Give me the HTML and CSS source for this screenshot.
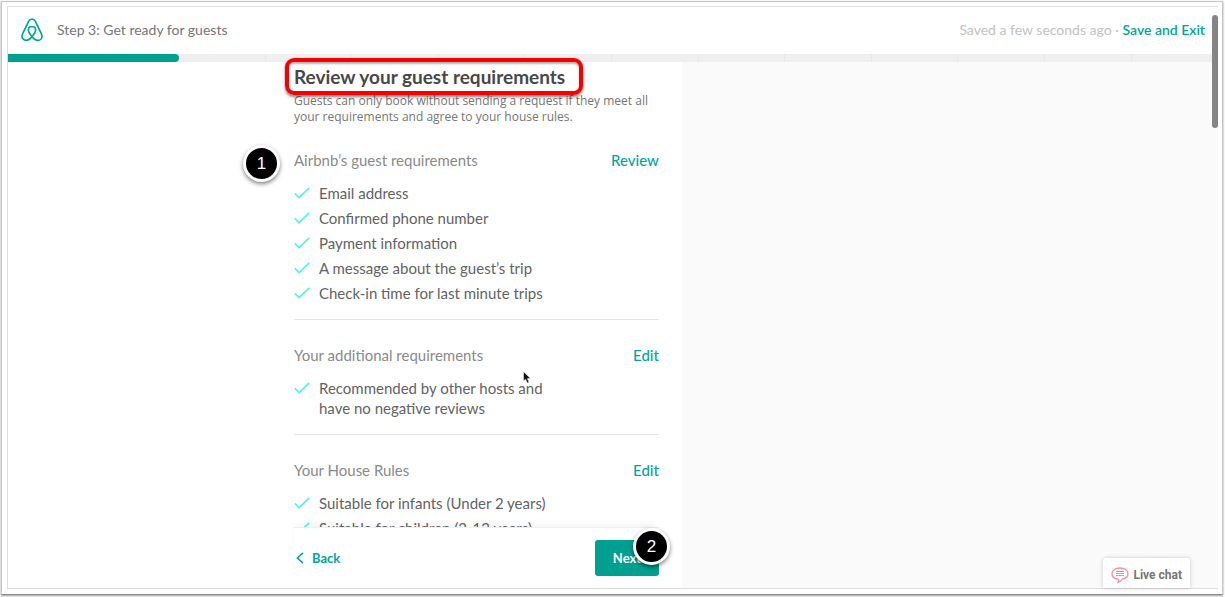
FILE: index.html
```
<!DOCTYPE html>
<html lang="en">
<head>
  <meta charset="UTF-8" />
  <meta name="viewport" content="width=device-width, initial-scale=1.0" />
  <title>Step 3: Get ready for guests</title>
  <link rel="stylesheet" href="styles.css">
</head>
<body>

<!-- Shared check mark -->
<svg class="sprite" aria-hidden="true">
  <symbol id="check" viewBox="0 0 16 12">
    <path d="M0.8 6.4 L5 10.6 L15.2 0.8" fill="none" stroke="#4df5e4" stroke-width="1.6" />
  </symbol>
</svg>

<div class="frame">
  <div class="window">
    <header class="topbar">
      <svg class="logo" viewBox="0 0 22 24" aria-hidden="true">
        <path d="M11 18.6 C8.6 15.8 7.4 13.9 7.4 12 C7.4 9.8 9 8.5 11 8.5 C13 8.5 14.6 9.8 14.6 12 C14.6 13.9 13.4 15.8 11 18.6 C9.2 20.8 7.4 22.4 5.3 22.4 C2.9 22.4 1 20.6 1 18.2 C1 17.2 1.3 16.4 1.8 15.3 L7.6 3.4 C8.5 1.7 9.4 1 11 1 C12.6 1 13.5 1.7 14.4 3.4 L20.2 15.3 C20.7 16.4 21 17.2 21 18.2 C21 20.6 19.1 22.4 16.7 22.4 C14.6 22.4 12.8 20.8 11 18.6 Z" fill="none" stroke="#00a699" stroke-width="1.7" stroke-linejoin="round" />
      </svg>
      <span class="step">Step 3: Get ready for guests</span>
      <span class="saved">Saved a few seconds ago · <a class="link" href="#">Save and Exit</a></span>
    </header>

    <div class="progress">
      <span class="done"></span>
      <i></i><i></i><i></i><i></i><i></i><i></i><i></i><i></i><i></i><i></i><i></i><i></i>
    </div>

    <div class="body">
      <main class="main">
        <div class="content">
          <h1 class="heading">Review your guest requirements</h1>
          <p class="intro">Guests can only book without sending a request if they meet all your requirements and agree to your house rules.</p>

          <section class="section">
            <span class="badge badge-one">1</span>
            <div class="section-head">
              <h2>Airbnb’s guest requirements</h2>
              <a class="link" href="#">Review</a>
            </div>
            <ul class="checks">
              <li><svg><use href="#check" /></svg><span>Email address</span></li>
              <li><svg><use href="#check" /></svg><span>Confirmed phone number</span></li>
              <li><svg><use href="#check" /></svg><span>Payment information</span></li>
              <li><svg><use href="#check" /></svg><span>A message about the guest’s trip</span></li>
              <li><svg><use href="#check" /></svg><span>Check-in time for last minute trips</span></li>
            </ul>
          </section>

          <section class="section">
            <div class="section-head">
              <h2>Your additional requirements</h2>
              <a class="link" href="#">Edit</a>
            </div>
            <ul class="checks">
              <li><svg><use href="#check" /></svg><span>Recommended by other hosts and<br>have no negative reviews</span></li>
            </ul>
            <svg class="pointer" viewBox="0 0 8 13" aria-hidden="true">
              <path d="M0.5 0.5 V10 L2.6 8.2 L4.2 12 L6 11.2 L4.4 7.6 H7.4 Z" fill="#111" stroke="#fff" stroke-width="0.5" />
            </svg>
          </section>

          <section class="section">
            <div class="section-head">
              <h2>Your House Rules</h2>
              <a class="link" href="#">Edit</a>
            </div>
            <ul class="checks">
              <li><svg><use href="#check" /></svg><span>Suitable for infants (Under 2 years)</span></li>
              <li><svg><use href="#check" /></svg><span>Suitable for children (2-12 years)</span></li>
            </ul>
          </section>
        </div>

        <footer class="footer">
          <div class="actions">
            <button class="back" type="button">
              <svg viewBox="0 0 8 12" aria-hidden="true"><path d="M7 0.8 L1.4 6 L7 11.2" fill="none" stroke="#00a699" stroke-width="1.6" /></svg>
              Back
            </button>
            <div class="next-wrap">
              <button class="next" type="button">Next</button>
              <span class="badge badge-two">2</span>
            </div>
          </div>
        </footer>
      </main>

      <aside class="side">
        <button class="chat" type="button">
          <svg viewBox="0 0 18 16" aria-hidden="true">
            <path d="M9 1 C13.6 1 17 3.3 17 6.6 C17 9.8 14.4 11.7 11.2 12.2 C10.4 13.6 9.2 14.6 7.2 15.2 C7.8 14.2 7.8 13.2 7.6 12.3 C3.8 11.9 1 9.9 1 6.6 C1 3.3 4.4 1 9 1 Z" fill="none" stroke="#ff8a8d" stroke-width="1.3" />
            <path d="M5 4.5 H13 M5 6.5 H13 M5 8.5 H13" fill="none" stroke="#ff8a8d" stroke-width="1" />
          </svg>
          Live chat
        </button>
      </aside>
    </div>

    <span class="scroll-thumb"></span>
  </div>
</div>

</body>
</html>
```
FILE: styles.css
```
* {
  box-sizing: border-box;
}

body {
  margin: 0;
  height: 100vh;
  padding: 1px 2px 2px 1px;
  overflow: hidden;
  background: #fff;
  color: #636363;
  font-family: "Lato", sans-serif;
  font-size: 15px;
  line-height: 20px;
}

h1, h2, p, ul {
  margin: 0;
  padding: 0;
}

.sprite {
  position: absolute;
  width: 0;
  height: 0;
}

.frame {
  height: 100%;
  padding: 4px 4px 5px 5px;
  border: 1px solid #c4c4c4;
  border-bottom-color: #8c8c8c;
  box-shadow: 0 1px 2px rgba(0, 0, 0, 0.4);
}

.window {
  position: relative;
  display: flex;
  flex-direction: column;
  height: 100%;
  border: 1px solid #dedede;
  border-width: 1px 0 1px 1px;
}

.link {
  color: #00a699;
  font-weight: 500;
  text-decoration: none;
}

/* Top bar */
.topbar {
  display: flex;
  align-items: center;
  height: 47px;
  flex: none;
  padding: 0 13px 2px;
  font-size: 14px;
}

.topbar .link {
  font-weight: 600;
}

.logo {
  width: 22px;
  height: 24px;
  margin-right: 14px;
}

.step {
  color: #767676;
}

.saved {
  margin-left: auto;
  color: #c2c2c2;
}

.progress {
  display: flex;
  flex: none;
  height: 8px;
  background: #efefef;
}

.progress i {
  flex: 1;
  border-right: 1px solid #e8e8e8;
}

.progress .done {
  flex: 2;
  border-radius: 0 4px 4px 0;
  background: #009f8f;
}

/* Columns */
.body {
  display: flex;
  flex: 1;
  min-height: 0;
}

.main {
  display: flex;
  flex-direction: column;
  width: 55.7%;
}

.content {
  flex: 1;
  min-height: 0;
  width: 365px;
  margin: 0 23px 0 auto;
  padding-top: 3px;
}

.heading {
  position: relative;
  display: table;
  margin-bottom: 4px;
  color: #484848;
  font-size: 19px;
  line-height: 24px;
}

.heading::after {
  content: "";
  position: absolute;
  inset: -7px -18px -6px -9px;
  border: 4px solid #f80000;
  border-radius: 9px;
  box-shadow: 0 2px 3px rgba(0, 0, 0, 0.5), inset 0 2px 2px rgba(0, 0, 0, 0.3);
}

.intro {
  padding-right: 10px;
  color: #767676;
  font-family: "Open Sans", sans-serif;
  font-size: 12px;
  line-height: 16px;
}

.section {
  position: relative;
  padding: 25px 0 16px;
  border-bottom: 1px solid #e4e4e4;
}

.section-head {
  display: flex;
  justify-content: space-between;
  margin-bottom: 13px;
}

.section-head h2 {
  color: #8a8a8a;
  font-size: 15px;
  font-weight: 400;
}

.checks {
  display: grid;
  gap: 5px;
  list-style: none;
}

.checks li {
  display: flex;
}

.checks svg {
  width: 16px;
  height: 12px;
  margin: 4px 9px 0 0;
}

.pointer {
  position: absolute;
  top: 51px;
  left: 229px;
  width: 8px;
  height: 13px;
}

/* Numbered callouts */
.badge {
  position: absolute;
  display: flex;
  align-items: center;
  justify-content: center;
  width: 37px;
  height: 37px;
  border: 3px solid #fff;
  border-radius: 50%;
  background: #000;
  color: #fff;
  font-family: "Liberation Sans", Arial, sans-serif;
  font-size: 17px;
  box-shadow: 0 2px 4px rgba(0, 0, 0, 0.5);
}

.badge-one {
  top: 20px;
  left: -51px;
}

.badge-two {
  top: -12px;
  right: -11px;
}

/* Footer */
.footer {
  position: relative;
  height: 61px;
  flex: none;
  padding-right: 23px;
  background: #fff;
}

.actions {
  display: flex;
  align-items: center;
  justify-content: space-between;
  width: 365px;
  height: 100%;
  margin-left: auto;
  border-top: 1px solid #efefef;
  box-shadow: 0 -6px 8px -4px rgba(0, 0, 0, 0.06);
}

.back,
.next,
.chat {
  border: 0;
  font: bold 13px/20px "Lato", sans-serif;
  cursor: pointer;
}

.back {
  display: flex;
  align-items: center;
  gap: 8px;
  padding: 0 2px;
  background: none;
  color: #00a699;
}

.back svg {
  width: 8px;
  height: 12px;
}

.next-wrap {
  position: relative;
}

.next {
  display: block;
  width: 64px;
  height: 36px;
  border-radius: 3px;
  background: #009f8f;
  color: #fff;
}

.side {
  display: flex;
  flex: 1;
  align-items: flex-end;
  justify-content: flex-end;
  padding-right: 28px;
  background: #fafafa;
}

.chat {
  display: flex;
  align-items: center;
  gap: 4px;
  height: 30px;
  padding: 4px 8px 0;
  border-radius: 3px 3px 0 0;
  background: #fff;
  color: #767676;
  font-family: "Roboto", sans-serif;
  font-size: 12px;
  box-shadow: 0 0 4px rgba(0, 0, 0, 0.2);
}

.chat svg {
  width: 18px;
  height: 16px;
}

.scroll-thumb {
  position: absolute;
  top: 8px;
  right: 0;
  width: 6px;
  height: 113px;
  border-radius: 3px;
  background: #858585;
}
```
